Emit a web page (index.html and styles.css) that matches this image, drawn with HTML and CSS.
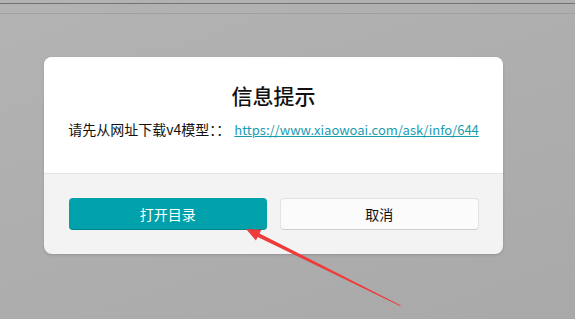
FILE: index.html
```html
<!DOCTYPE html>
<html lang="zh-CN">
<head>
    <meta charset="UTF-8">
    <title>信息提示</title>
    <link rel="stylesheet" href="styles.css">
</head>
<body>
    <div class="topbar"></div>

    <div class="dialog">
        <div class="dialog-body">
            <h2>信息提示</h2>
            <p>请先从网址下载v4模型：： <a href="#">https://www.xiaowoai.com/ask/info/644</a></p>
        </div>
        <div class="dialog-footer">
            <button class="primary">打开目录</button>
            <button class="cancel">取消</button>
        </div>
    </div>

    <!-- red arrow pointing at the button -->
    <svg class="arrow" width="575" height="319" viewBox="0 0 575 319">
        <polygon points="246,229 261.3,229.8 259.5,233.4 401,305.5 400,306 257.7,237 255.9,240.6" fill="#ee3b3b"/>
    </svg>
</body>
</html>
```

FILE: styles.css
```css
body {
    margin: 0;
    padding: 0;
    height: 319px;
    overflow: hidden;
    background: linear-gradient(160deg, #b3b3b3, #a9a9a9);
    font-family: "Noto Sans CJK SC", "Noto Sans", sans-serif;
    position: relative;
}

.topbar {
    height: 3px;
    border-bottom: 1px solid #727272;
}

.topbar::after {
    content: "";
    display: block;
    position: relative;
    top: 13px;
    height: 1px;
    background: #a0a0a0;
}

.dialog {
    width: 459px;
    margin: 53px 0 0 44px;
    border-radius: 8px;
    overflow: hidden;
    background: #f3f3f3;
    box-shadow: 0 1px 3px rgba(0, 0, 0, 0.15);
}

.dialog-body {
    background: white;
    height: 117px;
    border-bottom: 1px solid #e4e4e4;
    text-align: center;
    box-sizing: border-box;
    padding-top: 24px;
}

.dialog-body h2 {
    margin: 0;
    font-size: 21px;
    font-weight: 500;
    line-height: 28px;
    color: #111;
}

.dialog-body p {
    margin: 11px 0 0;
    font-size: 14px;
    line-height: 18px;
    color: #111;
}

.dialog-body a {
    color: #1a9cb0;
    font-size: 13px;
    margin-left: 1px;
}

.dialog-footer {
    display: flex;
    gap: 13px;
    padding: 24px 24px 24px 25px;
}

.dialog-footer button {
    flex: 1;
    height: 32px;
    font-family: inherit;
    font-size: 14px;
    border-radius: 4px;
    cursor: pointer;
}

.primary {
    background-color: #00a1aa;
    border: none;
    border-bottom: 1px solid #00858d;
    color: white;
}

.cancel {
    background-color: #fbfbfb;
    border: 1px solid #e2e2e2;
    border-bottom-color: #cfcfcf;
    color: #111;
}

.arrow {
    position: absolute;
    top: 0;
    left: 0;
}
```
